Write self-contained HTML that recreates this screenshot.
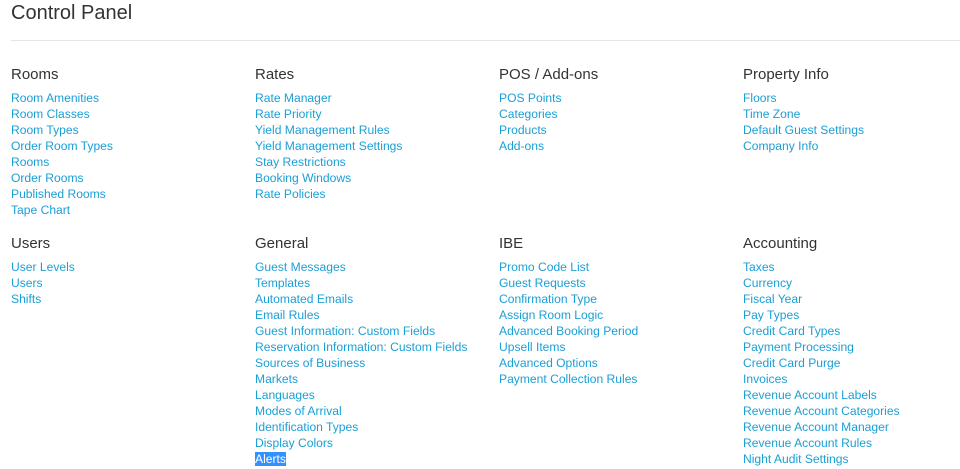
<!DOCTYPE html>
<html><head><meta charset="utf-8"><style>
body{margin:0;background:#fff;font-family:"Liberation Sans",sans-serif;width:960px;height:469px;overflow:hidden;position:relative}
h1{position:absolute;left:11px;top:0;margin:0;font-weight:normal;font-size:20px;line-height:26px;color:#333}
.hr{position:absolute;left:11px;right:0;top:40px;border-top:1px solid #e5e5e5}
.col{position:absolute;width:240px}
.col h2{margin:0;font-weight:normal;font-size:15px;line-height:20px;color:#333;height:25px}
.col a{display:block;font-size:12.1px;line-height:16px;color:#1a9fd6;text-decoration:none;white-space:nowrap}
.sel{background:#3390ff;color:#fff!important;display:inline!important}
</style></head><body>
<h1>Control Panel</h1>
<div class="hr"></div>
<div class="col" style="left:11px;top:65px"><h2>Rooms</h2><a>Room Amenities</a><a>Room Classes</a><a>Room Types</a><a>Order Room Types</a><a>Rooms</a><a>Order Rooms</a><a>Published Rooms</a><a>Tape Chart</a></div>
<div class="col" style="left:255px;top:65px"><h2>Rates</h2><a>Rate Manager</a><a>Rate Priority</a><a>Yield Management Rules</a><a>Yield Management Settings</a><a>Stay Restrictions</a><a>Booking Windows</a><a>Rate Policies</a></div>
<div class="col" style="left:499px;top:65px"><h2>POS / Add-ons</h2><a>POS Points</a><a>Categories</a><a>Products</a><a>Add-ons</a></div>
<div class="col" style="left:743px;top:65px"><h2>Property Info</h2><a>Floors</a><a>Time Zone</a><a>Default Guest Settings</a><a>Company Info</a></div>
<div class="col" style="left:11px;top:234px"><h2>Users</h2><a>User Levels</a><a>Users</a><a>Shifts</a></div>
<div class="col" style="left:255px;top:234px"><h2>General</h2><a>Guest Messages</a><a>Templates</a><a>Automated Emails</a><a>Email Rules</a><a>Guest Information: Custom Fields</a><a>Reservation Information: Custom Fields</a><a>Sources of Business</a><a>Markets</a><a>Languages</a><a>Modes of Arrival</a><a>Identification Types</a><a>Display Colors</a><div style="line-height:16px"><a class="sel">Alerts</a></div></div>
<div class="col" style="left:499px;top:234px"><h2>IBE</h2><a>Promo Code List</a><a>Guest Requests</a><a>Confirmation Type</a><a>Assign Room Logic</a><a>Advanced Booking Period</a><a>Upsell Items</a><a>Advanced Options</a><a>Payment Collection Rules</a></div>
<div class="col" style="left:743px;top:234px"><h2>Accounting</h2><a>Taxes</a><a>Currency</a><a>Fiscal Year</a><a>Pay Types</a><a>Credit Card Types</a><a>Payment Processing</a><a>Credit Card Purge</a><a>Invoices</a><a>Revenue Account Labels</a><a>Revenue Account Categories</a><a>Revenue Account Manager</a><a>Revenue Account Rules</a><a>Night Audit Settings</a></div>
</body></html>
